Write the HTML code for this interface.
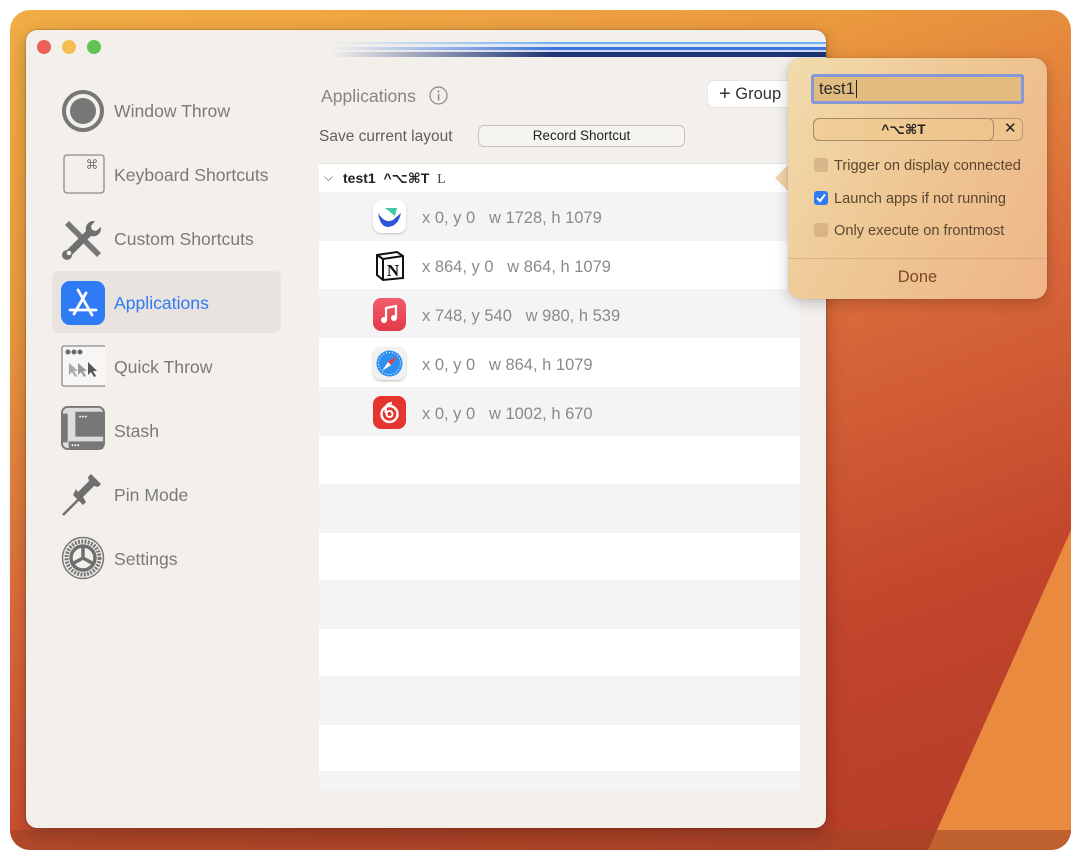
<!DOCTYPE html>
<html><head><meta charset="utf-8"><style>
*{margin:0;padding:0;box-sizing:border-box}
body{width:1080px;height:857px;background:#fff;position:relative;overflow:hidden;font-family:"Liberation Sans",sans-serif}
.wall{position:absolute;left:10px;top:10px;width:1061px;height:840px;border-radius:20px;overflow:hidden;
background:linear-gradient(160deg,#f2ad45 0%,#eb9a3e 25%,#d9683a 50%,#c2452c 75%,#b33c26 100%)}
.win{position:absolute;left:26px;top:30px;width:800px;height:798px;background:#f3f0ec;border-radius:11px;box-shadow:0 0 2px rgba(0,0,0,.35),0 6px 18px rgba(0,0,0,.25)}
.dot{position:absolute;top:40px;width:14px;height:14px;border-radius:50%}
.abs{position:absolute}
.side{position:absolute;left:114px;font-size:17.6px;color:#7a7a7a;line-height:20px}
.ico{position:absolute;left:61px;width:44px;height:44px}
.row{position:absolute;left:319px;width:481px;height:49px}
.rt{position:absolute;left:422px;font-size:16.5px;color:#8a8a8a;line-height:20px;white-space:pre}
.ai{position:absolute;left:373px;width:33px;height:33px;border-radius:8px}
.cb{position:absolute;left:814px;width:14px;height:14px;border-radius:3px;background:rgba(190,150,110,.45)}
.ct{position:absolute;left:834px;font-size:14.6px;color:#5b4630;line-height:16px}
</style></head><body>
<div class="wall">
<svg width="1061" height="840" style="position:absolute;left:0;top:0">
<polygon points="1061,520 1061,840 918,840" fill="#e98a3e"/>
<polygon points="0,820 1061,820 1061,840 0,840" fill="#a24626" opacity=".6"/>
</svg>
</div>
<div class="win"></div>
<div class="dot" style="left:37px;background:#ec5f57"></div>
<div class="dot" style="left:62px;background:#f3bd4f"></div>
<div class="dot" style="left:87px;background:#5fc454"></div>
<div class="abs" style="left:330px;top:42px;width:496px;height:15px;
background:linear-gradient(to bottom,#6fb1f5 0,#6fb1f5 2px,#dbe6f6 2px,#dbe6f6 5px,#3f76dd 5px,#3f76dd 8px,#cfd9ee 8px,#cfd9ee 10px,#1e3476 10px,#1e3476 15px);
-webkit-mask-image:linear-gradient(to right,transparent,#000 45%);mask-image:linear-gradient(to right,transparent,#000 45%)"></div>

<!-- sidebar -->
<div class="abs" style="left:52px;top:271px;width:229px;height:62px;background:#e8e3df;border-radius:7px"></div>
<svg class="ico" style="top:89px" viewBox="0 0 44 44"><circle cx="22" cy="22" r="19" fill="none" stroke="#777" stroke-width="4"/><circle cx="22" cy="22" r="13" fill="#777"/></svg>
<div class="side" style="top:101px">Window Throw</div>
<svg class="ico" style="top:153px" viewBox="0 0 44 44"><rect x="3" y="2" width="40" height="38" rx="3" fill="none" stroke="#8a8a8a" stroke-width="1.3"/><text x="31" y="16" font-size="13" fill="#777" text-anchor="middle" font-family="DejaVu Sans">⌘</text></svg>
<div class="side" style="top:165px">Keyboard Shortcuts</div>
<svg class="ico" style="top:217px" viewBox="0 0 44 44"><path d="M4 8 L8 4 L40 36 L36 40 Z" fill="#777"/><path d="M34 4 a8 8 0 0 0 -9 10 L6 33 a5 5 0 1 0 5 5 L30 19 a8 8 0 0 0 10 -9 l-5 4 -4 -1 -1 -4 z" fill="#6f6f6f"/><circle cx="8" cy="36" r="2.3" fill="#f3f0ec"/></svg>
<div class="side" style="top:229px">Custom Shortcuts</div>
<svg class="ico" style="top:281px" viewBox="0 0 44 44"><rect width="44" height="44" rx="9" fill="#2f7bf6"/><path d="M17 9 L31 34 M25 12 L13 33 M9 29 H26 M29 29 H35" stroke="#fff" stroke-width="2.8" stroke-linecap="round"/></svg>
<div class="side" style="top:293px;color:#2f7bf6">Applications</div>
<svg class="ico" style="top:345px" viewBox="0 0 44 44"><rect x="1" y="1" width="44" height="40" rx="2" fill="#f8f6f4" stroke="#8a8a8a" stroke-width="1.3"/><circle cx="7" cy="7" r="2.5" fill="#6a6a6a"/><circle cx="13" cy="7" r="2.5" fill="#6a6a6a"/><circle cx="19" cy="7" r="2.5" fill="#6a6a6a"/><path d="M8 18 l0 12 3 -3 3 5 2 -1 -3 -5 4 0z" fill="#aaa"/><path d="M17 18 l0 12 3 -3 3 5 2 -1 -3 -5 4 0z" fill="#999"/><path d="M27 17 l0 13 3 -3 3 5 2 -1 -3 -5 4 0z" fill="#555"/></svg>
<div class="side" style="top:357px">Quick Throw</div>
<svg class="ico" style="top:406px" viewBox="0 0 46 46"><rect x="1" y="1" width="44" height="44" rx="6" fill="#ddd" stroke="#777" stroke-width="2"/><rect x="1" y="8" width="6" height="30" fill="#777"/><rect x="15" y="6" width="30" height="26" fill="#777"/><rect x="8" y="37" width="36" height="8" fill="#777"/><circle cx="20" cy="11" r="1" fill="#fff"/><circle cx="23" cy="11" r="1" fill="#fff"/><circle cx="26" cy="11" r="1" fill="#fff"/><circle cx="12" cy="41" r="1" fill="#fff"/><circle cx="15" cy="41" r="1" fill="#fff"/><circle cx="18" cy="41" r="1" fill="#fff"/></svg>
<div class="side" style="top:421px">Stash</div>
<svg class="ico" style="top:473px" viewBox="0 0 44 44"><path d="M2 42 L18 26" stroke="#6f6f6f" stroke-width="2.5"/><path d="M12 22 L22 32 L25 29 L22 24 L33 13 L37 14 L40 11 L30 1 L27 4 L28 8 L17 19 L15 16 Z" fill="#6f6f6f"/></svg>
<div class="side" style="top:485px">Pin Mode</div>
<svg class="ico" style="top:536px" viewBox="0 0 44 44"><circle cx="22" cy="22" r="20.5" fill="none" stroke="#777" stroke-width="1.5"/><circle cx="22" cy="22" r="16.5" fill="none" stroke="#777" stroke-width="4" stroke-dasharray="2 1.3"/><circle cx="22" cy="22" r="12" fill="none" stroke="#6f6f6f" stroke-width="3.5"/><path d="M22 22 V10 M22 22 L11 28 M22 22 L33 28" stroke="#6f6f6f" stroke-width="3.5"/></svg>
<div class="side" style="top:549px">Settings</div>

<!-- content header -->
<div class="abs" style="left:321px;top:86px;font-size:17.6px;color:#858585">Applications</div>
<svg class="abs" style="left:429px;top:86px" width="19" height="19"><circle cx="9.5" cy="9.5" r="8.5" fill="none" stroke="#888" stroke-width="1.2"/><rect x="8.8" y="8" width="1.5" height="6.5" fill="#888"/><circle cx="9.5" cy="5.5" r="1" fill="#888"/></svg>
<div class="abs" style="left:708px;top:81px;width:100px;height:26px;background:#fff;border-radius:6px;box-shadow:0 0 1px rgba(0,0,0,.3);font-size:16.5px;color:#333;line-height:26px;padding-left:11px"><span style="font-size:20px;vertical-align:-1px">+</span> Group</div>
<div class="abs" style="left:319px;top:128px;font-size:15.5px;color:#5f5f5f">Save current layout</div>
<div class="abs" style="left:478px;top:125px;width:207px;height:22px;border:1px solid #c5c1bd;border-radius:6px;background:#f6f4f1;text-align:center;font-size:13.5px;line-height:20px;color:#222">Record Shortcut</div>

<!-- table -->
<div class="abs" style="left:319px;top:163px;width:481px;height:627px;background:#fff;border-top:1px solid #e6e4e2"></div>
<div class="row" style="top:192px;background:#f3f4f3"></div>
<div class="row" style="top:289px;background:#f3f4f3"></div>
<div class="row" style="top:387px;background:#f3f4f3"></div>
<div class="row" style="top:484px;background:#f3f4f3"></div>
<div class="row" style="top:580px;background:#f3f4f3"></div>
<div class="row" style="top:676px;background:#f3f4f3"></div>
<div class="row" style="top:771px;height:19px;background:#f3f4f3"></div>
<div class="abs" style="left:324px;top:170px;font-size:12px;color:#555">⌵</div>
<div class="abs" style="left:343px;top:170px;font-size:14px;font-weight:bold;color:#222;white-space:pre;font-family:'Liberation Sans','DejaVu Sans',sans-serif">test1  ^⌥⌘T  <span style="font-weight:normal;font-family:'Liberation Serif',serif;color:#444">L</span></div>

<div class="ai" style="top:200px;background:#fff;box-shadow:0 1px 2px rgba(0,0,0,.2)"><svg width="33" height="33"><path d="M12 8 L24 8 L22 16 Z" fill="#44c9a8"/><path d="M5 13 Q12 24 20 20 L28 13 Q25 27 14 27 Q7 26 5 13Z" fill="#2c55d6"/></svg></div>
<div class="rt" style="top:208px">x 0, y 0   w 1728, h 1079</div>
<div class="ai" style="top:249px;background:#fff"><svg width="33" height="33"><path d="M4 6 L24 3 L30 7 L30 29 L10 31 L4 26 Z" fill="#fff" stroke="#111" stroke-width="2"/><path d="M4 6 L10 10 L30 7 M10 10 L10 31" stroke="#111" stroke-width="2" fill="none"/><text x="20" y="27" font-size="17" font-weight="bold" font-family="Liberation Serif" text-anchor="middle" fill="#111">N</text></svg></div>
<div class="rt" style="top:257px">x 864, y 0   w 864, h 1079</div>
<div class="ai" style="top:298px;background:linear-gradient(#f35d6c,#e23a48)"><svg width="33" height="33"><path d="M13 22 V10 L23 8 V20" stroke="#fff" stroke-width="2.2" fill="none"/><circle cx="11" cy="22" r="3" fill="#fff"/><circle cx="21" cy="20" r="3" fill="#fff"/></svg></div>
<div class="rt" style="top:306px">x 748, y 540   w 980, h 539</div>
<div class="ai" style="top:347px;background:#f1f1f1;box-shadow:0 1px 2px rgba(0,0,0,.25)"><svg width="33" height="33"><circle cx="16.5" cy="16.5" r="13" fill="#2f8ff0"/><circle cx="16.5" cy="16.5" r="11" fill="none" stroke="#fff" stroke-width="1" stroke-dasharray="1 2"/><path d="M24 9 L18 18 L15 15Z" fill="#f33"/><path d="M9 24 L15 15 L18 18Z" fill="#fff"/></svg></div>
<div class="rt" style="top:355px">x 0, y 0   w 864, h 1079</div>
<div class="ai" style="top:396px;background:#e4352f"><svg width="33" height="33"><circle cx="16.5" cy="18" r="8" fill="none" stroke="#fff" stroke-width="2.4"/><circle cx="16.5" cy="18" r="3" fill="none" stroke="#fff" stroke-width="2"/><path d="M13 17 Q11 8 19 7" fill="none" stroke="#fff" stroke-width="2.4"/></svg></div>
<div class="rt" style="top:404px">x 0, y 0   w 1002, h 670</div>

<!-- popover -->
<svg class="abs" style="left:772px;top:163px" width="20" height="32"><path d="M18 0 L3 15 L18 30 Z" fill="#f1d6a6"/></svg>
<div class="abs" style="left:788px;top:58px;width:259px;height:241px;border-radius:13px;background:linear-gradient(120deg,#f1dcac 0%,#eec693 50%,#eeb488 100%);box-shadow:0 0 1px rgba(0,0,0,.3),0 4px 14px rgba(0,0,0,.2)"></div>
<div class="abs" style="left:811px;top:74px;width:213px;height:30px;border:3px solid #8796d6;border-radius:3px;background:#e2bb7e;font-size:16.5px;color:#2a2a2a;line-height:24px;padding-left:5px">test1<span style="border-left:1.5px solid #222;margin-left:1px"></span></div>
<div class="abs" style="left:813px;top:118px;width:210px;height:23px;border:1px solid #b89872;border-radius:6px;background:rgba(240,200,140,.5)"></div>
<div class="abs" style="left:813px;top:118px;width:181px;height:23px;border:1px solid #a88a66;border-radius:6px;text-align:center;font-size:13.5px;font-weight:bold;line-height:21px;color:#222;font-family:'Liberation Sans','DejaVu Sans',sans-serif">^⌥⌘T</div>
<div class="abs" style="left:1004px;top:119px;font-size:15px;color:#222">✕</div>
<div class="cb" style="top:158px"></div><div class="ct" style="top:158px">Trigger on display connected</div>
<div class="cb" style="top:191px;background:#2f7bf6"><svg width="14" height="14"><path d="M3 7 L6 10 L11 3.5" stroke="#fff" stroke-width="2" fill="none"/></svg></div><div class="ct" style="top:191px">Launch apps if not running</div>
<div class="cb" style="top:223px"></div><div class="ct" style="top:223px">Only execute on frontmost</div>
<div class="abs" style="left:788px;top:258px;width:259px;height:1px;background:rgba(160,110,70,.25)"></div>
<div class="abs" style="left:788px;top:268px;width:259px;text-align:center;font-size:16.5px;color:#7a4a28">Done</div>
</body></html>
